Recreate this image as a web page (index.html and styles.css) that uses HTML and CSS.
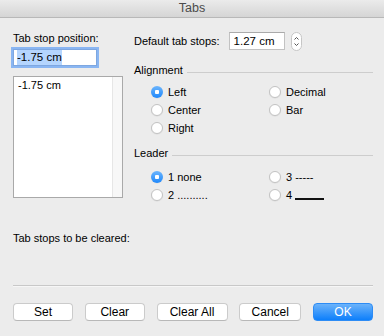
FILE: index.html
```html
<!DOCTYPE html>
<html lang="en">
<head>
    <meta charset="UTF-8">
    <title>Tabs</title>
    <link rel="stylesheet" href="styles.css">
</head>
<body>
    <div class="window">
        <!-- Title bar -->
        <header class="titlebar">Tabs</header>

        <main class="dialog">
            <div class="top">
                <!-- Tab stop list -->
                <section class="stops">
                    <div class="caption">Tab stop position:</div>
                    <div class="field focused"><span class="selection">-1.75 cm</span></div>
                    <div class="list">
                        <div class="list-items">
                            <div class="list-item">-1.75 cm</div>
                        </div>
                        <div class="list-track"></div>
                    </div>
                </section>

                <!-- Settings -->
                <section class="settings">
                    <div class="default-row">
                        <span>Default tab stops:</span>
                        <div class="field small">1.27 cm</div>
                        <svg class="stepper" width="11" height="19" viewBox="0 0 11 19">
                            <rect x="0.5" y="0.5" width="10" height="18" rx="5" fill="#fff" stroke="#c6c6c6"></rect>
                            <polyline points="3.5 7.5 5.5 5.5 7.5 7.5" fill="none" stroke="#555" stroke-width="1"></polyline>
                            <polyline points="3.5 11.5 5.5 13.5 7.5 11.5" fill="none" stroke="#555" stroke-width="1"></polyline>
                        </svg>
                    </div>

                    <div class="group">
                        <div class="group-title"><span>Alignment</span><span class="rule"></span></div>
                        <div class="options">
                            <label class="option"><span class="radio checked"></span>Left</label>
                            <label class="option"><span class="radio"></span>Decimal</label>
                            <label class="option"><span class="radio"></span>Center</label>
                            <label class="option"><span class="radio"></span>Bar</label>
                            <label class="option"><span class="radio"></span>Right</label>
                        </div>
                    </div>

                    <div class="group leader">
                        <div class="group-title"><span>Leader</span><span class="rule"></span></div>
                        <div class="options">
                            <label class="option"><span class="radio checked"></span>1 none</label>
                            <label class="option"><span class="radio"></span>3 -----</label>
                            <label class="option"><span class="radio"></span>2 ..........</label>
                            <label class="option"><span class="radio"></span>4&nbsp;<span class="underline"></span></label>
                        </div>
                    </div>
                </section>
            </div>

            <div class="clear-label">Tab stops to be cleared:</div>
            <div class="separator"></div>

            <!-- Buttons -->
            <div class="buttons">
                <button class="btn set">Set</button>
                <button class="btn clear">Clear</button>
                <button class="btn clear-all">Clear All</button>
                <button class="btn cancel">Cancel</button>
                <button class="btn primary">OK</button>
            </div>
        </main>
    </div>
</body>
</html>
```

FILE: styles.css
```css
body {
    margin: 0;
    background: #ececec;
    font-family: 'Liberation Sans', Arial, sans-serif;
    font-size: 11px;
    color: #000;
}

.window {
    width: 384px;
    height: 336px;
    background: #ececec;
    overflow: hidden;
}

/* Title bar */
.titlebar {
    height: 17px;
    line-height: 17px;
    text-align: center;
    font-size: 12.5px;
    color: #4b4b4b;
    background: linear-gradient(#ebebeb, #d5d5d5);
    border-bottom: 1px solid #b8b8b8;
}

.dialog {
    padding: 14px 11px 0 13px;
}

.top {
    display: flex;
    gap: 11px;
}

/* Left column */
.stops {
    width: 110px;
    display: flex;
    flex-direction: column;
}

.caption {
    line-height: 13px;
}

.field {
    box-sizing: border-box;
    background: #fff;
    border: 1px solid #c2c2c2;
    border-top-color: #aaa;
    height: 17px;
    line-height: 15px;
    padding: 0 3px;
    font-size: 11.5px;
}

.field.focused {
    width: 84px;
    margin-top: 4px;
    box-shadow: 0 0 0 2px #8ab6f2;
    border-color: #7ea7e0;
}

.selection {
    background: #b4d5fe;
    display: inline-block;
    line-height: 15px;
}

.list {
    margin-top: 10px;
    height: 122px;
    box-sizing: border-box;
    border: 1px solid #a9a9a9;
    background: #fff;
    display: flex;
}

.list-items {
    flex: 1;
    padding: 2px 4px;
}

.list-item {
    line-height: 13px;
}

.list-track {
    width: 9px;
    background: #f7f7f7;
    border-left: 1px solid #e6e6e6;
}

/* Right column */
.settings {
    flex: 1;
    display: flex;
    flex-direction: column;
}

.default-row {
    display: flex;
    align-items: center;
    height: 18px;
}

.field.small {
    width: 56px;
    height: 18px;
    line-height: 16px;
    margin-left: 9px;
    padding: 0 4px;
}

.stepper {
    margin-left: 6px;
}

.group {
    margin-top: 14px;
}

.group.leader {
    margin-top: 10px;
}

.group-title {
    display: flex;
    line-height: 13px;
    gap: 4px;
}

.group-title .rule {
    flex: 1;
    height: 1px;
    margin-top: 8px;
    background: #cdcdcd;
}

.options {
    display: grid;
    grid-template-columns: 118px 1fr;
    grid-auto-rows: 18px;
    padding-left: 17px;
    margin-top: 6px;
}

.leader .options {
    margin-top: 8px;
}

.option {
    display: flex;
    align-items: center;
    gap: 5px;
}

.radio {
    box-sizing: border-box;
    width: 12px;
    height: 12px;
    border-radius: 50%;
    background: #fff;
    border: 1px solid #c3c3c3;
    box-shadow: 0 0.5px 1px rgba(0, 0, 0, 0.08);
}

.radio.checked {
    border: none;
    background: radial-gradient(circle, #fff 0 2px, transparent 2.5px), linear-gradient(#6bb5fd, #1f88fb);
}

.underline {
    display: inline-block;
    width: 29px;
    height: 2px;
    background: #111;
    align-self: flex-end;
    margin-bottom: 4px;
    margin-left: -5px;
}

/* Bottom */
.clear-label {
    margin-top: 28px;
    line-height: 13px;
}

.separator {
    margin-top: 40px;
    height: 1px;
    background: #c8c8c8;
    box-shadow: 0 1px 0 #f6f6f6;
}

.buttons {
    display: flex;
    justify-content: space-between;
    margin-top: 17px;
}

.btn {
    height: 18px;
    padding: 0;
    font-family: 'Liberation Sans', Arial, sans-serif;
    font-size: 12px;
    color: #000;
    background: #fff;
    border: 1px solid #cbcbcb;
    border-bottom-color: #b8b8b8;
    border-radius: 4px;
}

.btn.set { width: 60px; }
.btn.clear { width: 60px; }
.btn.clear-all { width: 71px; }
.btn.cancel { width: 62px; }

.btn.primary {
    width: 60px;
    color: #fff;
    border-color: #2d8cf5;
    background: linear-gradient(#6cb3fa, #0d7ffb);
}
```
